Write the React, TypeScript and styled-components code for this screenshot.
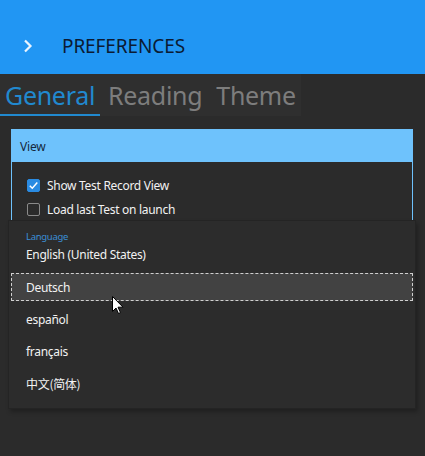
import React from 'react';
import styled, { createGlobalStyle } from 'styled-components';

const GlobalStyle = createGlobalStyle`
  html, body {
    margin: 0;
    padding: 0;
    background: #2b2b2b;
  }
  * {
    box-sizing: border-box;
  }
`;

const Page = styled.div`
  position: relative;
  width: 425px;
  height: 456px;
  overflow: hidden;
  background: #2b2b2b;
  font-family: 'Noto Sans', 'Open Sans', sans-serif;
  display: flex;
  flex-direction: column;
`;

const Header = styled.header`
  height: 74px;
  flex: none;
  background: #2196f3;
  display: flex;
  align-items: center;
  padding: 18px 0 0 22px;
  gap: 28px;
`;

const Title = styled.h1`
  margin: 0;
  font-size: 19px;
  font-weight: 400;
  color: #0b1b33;
  letter-spacing: -0.1px;
`;

const TabStrip = styled.nav`
  height: 42px;
  flex: none;
  display: flex;
`;

const TabList = styled.div`
  display: flex;
  background: #2f2f2f;
`;

const Tab = styled.div<{ $active?: boolean }>`
  padding: 0 5px;
  font-size: 25px;
  line-height: 42px;
  color: ${(p) => (p.$active ? '#2189cf' : '#7d7d7d')};
  border-bottom: 2px solid ${(p) => (p.$active ? '#2189cf' : 'transparent')};
  margin-right: ${(p) => (p.$active ? '3px' : '4px')};
  letter-spacing: -0.3px;

  &:last-child {
    margin-right: 0;
  }
`;

const Content = styled.main`
  padding: 13px 12px 0 11px;
`;

const GroupBox = styled.section`
  border-left: 1px solid #6ec2fc;
  border-right: 1px solid #6ec2fc;
`;

const GroupHeader = styled.div`
  height: 33px;
  background: #6ec2fc;
  display: flex;
  align-items: center;
  padding: 2px 0 0 8px;
  font-size: 12px;
  color: #15283d;
  letter-spacing: -0.2px;
`;

const GroupBody = styled.div`
  padding: 15px 0 11px 15px;
  display: flex;
  flex-direction: column;
  gap: 8px;
`;

const CheckRow = styled.label`
  display: flex;
  align-items: center;
  gap: 7px;
  font-size: 12px;
  color: #f2f2f2;
  height: 16px;
  letter-spacing: -0.3px;
`;

const Box = styled.span<{ $checked?: boolean }>`
  width: 13px;
  height: 13px;
  flex: none;
  border-radius: 2px;
  display: flex;
  align-items: center;
  justify-content: center;
  background: ${(p) => (p.$checked ? '#2a8be2' : 'transparent')};
  border: 1px solid ${(p) => (p.$checked ? '#2a8be2' : '#8a8a8a')};
`;

const Popup = styled.div`
  position: absolute;
  left: 8px;
  top: 220px;
  width: 408px;
  height: 189px;
  background: #2c2c2c;
  border: 1px solid #242424;
  box-shadow: 2px 3px 4px rgba(0, 0, 0, 0.25);
  padding: 9px 2px 0 2px;
  display: flex;
  flex-direction: column;
  letter-spacing: -0.3px;
`;

const FieldLabel = styled.div`
  padding-left: 15px;
  font-size: 9.5px;
  line-height: 13px;
  color: #3b8ed6;
`;

const FieldValue = styled.div`
  padding-left: 15px;
  margin-top: 3px;
  font-size: 12px;
  line-height: 17px;
  color: #f2f2f2;
`;

const OptionList = styled.ul`
  list-style: none;
  margin: 8px 0 0 0;
  padding: 0;
`;

const Option = styled.li<{ $hover?: boolean }>`
  height: 32px;
  padding: 2px 0;
  font-size: 12px;
  color: #f2f2f2;

  & > span {
    display: flex;
    align-items: center;
    height: 28px;
    padding-left: 15px;
    background: ${(p) => (p.$hover ? '#424242' : 'transparent')};
    outline: ${(p) => (p.$hover ? '1px dashed #d0d0d0' : 'none')};
    outline-offset: -1px;
  }
`;

const Cursor = styled.svg`
  position: absolute;
  left: 112px;
  top: 296px;
`;

const Chevron = () => (
  <svg width="12" height="16" viewBox="0 0 12 16">
    <path d="M3 2.5 L8.5 8 L3 13.5" fill="none" stroke="#eaf5ff" strokeWidth="2.2" />
  </svg>
);

const Check = () => (
  <svg width="11" height="11" viewBox="0 0 11 11">
    <path d="M1.8 5.8 L4.3 8.2 L9.3 2.6" fill="none" stroke="#ffffff" strokeWidth="1.5" />
  </svg>
);

const languages = ['Deutsch', 'español', 'français', '中文(简体)'];

export default function App() {
  return (
    <>
      <GlobalStyle />
      <Page>
        <Header>
          <Chevron />
          <Title>PREFERENCES</Title>
        </Header>
        <TabStrip>
          <TabList>
            <Tab $active>General</Tab>
            <Tab>Reading</Tab>
            <Tab>Theme</Tab>
          </TabList>
        </TabStrip>
        <Content>
          <GroupBox>
            <GroupHeader>View</GroupHeader>
            <GroupBody>
              <CheckRow>
                <Box $checked>
                  <Check />
                </Box>
                Show Test Record View
              </CheckRow>
              <CheckRow>
                <Box />
                Load last Test on launch
              </CheckRow>
            </GroupBody>
          </GroupBox>
        </Content>
        <Popup>
          <FieldLabel>Language</FieldLabel>
          <FieldValue>English (United States)</FieldValue>
          <OptionList>
            {languages.map((l, i) => (
              <Option key={l} $hover={i === 0}>
                <span style={i === 3 ? { fontFamily: "'Noto Sans CJK SC', sans-serif" } : undefined}>{l}</span>
              </Option>
            ))}
          </OptionList>
        </Popup>
        <Cursor width="12" height="19" viewBox="0 0 12 19">
          <path d="M0.5 0.5 L0.5 15.5 L4 12 L6.5 17.5 L8.5 16.6 L6 11.2 L11 11.2 Z" fill="#ffffff" stroke="#000000" strokeWidth="1" />
        </Cursor>
      </Page>
    </>
  );
}
